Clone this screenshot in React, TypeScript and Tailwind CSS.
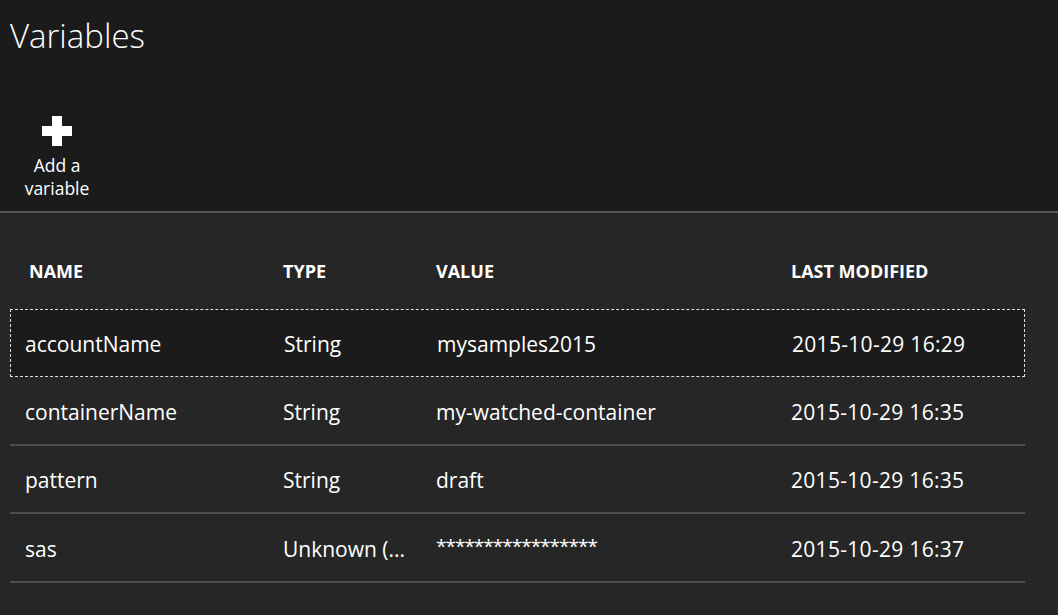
import React from "react";

type Variable = {
  name: string;
  type: string;
  value: string;
  modified: string;
  masked?: boolean;
};

const variables: Variable[] = [
  { name: "accountName", type: "String", value: "mysamples2015", modified: "2015-10-29 16:29" },
  { name: "containerName", type: "String", value: "my-watched-container", modified: "2015-10-29 16:35" },
  { name: "pattern", type: "String", value: "draft", modified: "2015-10-29 16:35" },
  { name: "sas", type: "Unknown (...", value: "*****************", modified: "2015-10-29 16:37", masked: true },
];

const font = { fontFamily: "'Open Sans', 'Noto Sans', sans-serif" };

const PlusIcon = () => (
  <svg width="30" height="30" viewBox="0 0 30 30" fill="#fff">
    <rect x="10" y="0" width="10" height="30" />
    <rect x="0" y="10" width="30" height="10" />
  </svg>
);

const Row = ({ v, selected }: { v: Variable; selected: boolean }) => (
  <div
    className={`grid grid-cols-[258px_153px_355px_1fr] items-center pt-[4px] text-[21px] text-white ${
      selected
        ? "h-[68px] border border-dashed border-[#e0e0e0] bg-[#1b1b1b]"
        : "h-[68.5px] border-b-2 border-[#4d4d4d]"
    }`}
  >
    <div className={selected ? "pl-[14px]" : "pl-[15px]"}>{v.name}</div>
    <div className="pl-[15px]">{v.type}</div>
    <div className={v.masked ? "pl-[15px] text-[19px] tracking-[-1px] -mt-[6px]" : "pl-[15px]"}>{v.value}</div>
    <div className="pl-[15px] tracking-[0.3px]">{v.modified}</div>
  </div>
);

export default function App() {
  return (
    <div className="flex h-[615px] w-[1058px] flex-col overflow-hidden bg-[#262626]" style={font}>
      <div className="flex h-[211px] flex-col bg-[#1b1b1b] px-[10px]">
        <h1 className="mt-[14px] text-[33px] font-light leading-[44px] text-white">Variables</h1>
        <button className="mt-[58px] flex w-[94px] flex-col items-center text-white">
          <PlusIcon />
          <span className="mt-[8px] text-[17.5px] leading-[23px]">
            Add a
            <br />
            variable
          </span>
        </button>
      </div>
      <div className="h-[2px] bg-[#575757]" />
      <div className="flex flex-1 flex-col px-[10px]">
        <div className="mt-[45px] grid h-[24px] grid-cols-[258px_153px_355px_1fr] items-center text-[18px] font-bold text-white">
          <div className="pl-[19px]">NAME</div>
          <div className="pl-[15px]">TYPE</div>
          <div className="pl-[15px]">VALUE</div>
          <div className="pl-[15px]">LAST MODIFIED</div>
        </div>
        <div className="mt-[27px] w-[1015px]">
          {variables.map((v, i) => (
            <Row key={v.name} v={v} selected={i === 0} />
          ))}
        </div>
      </div>
    </div>
  );
}
